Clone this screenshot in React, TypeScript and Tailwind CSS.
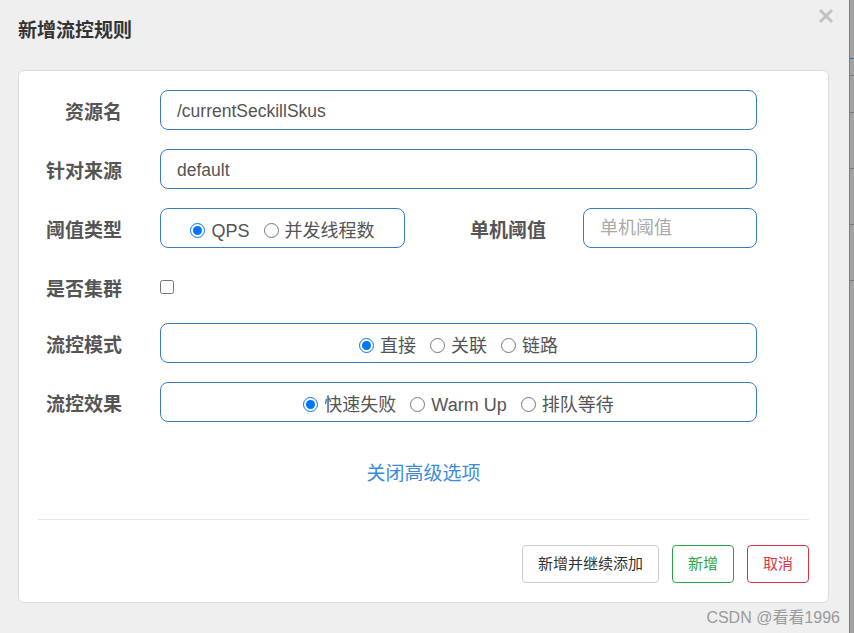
import { useState } from "react";

const font = "font-['Liberation_Sans','Noto_Sans_CJK_SC',sans-serif]";

function Radio({ name, label, checked, onChange }: { name: string; label: string; checked: boolean; onChange: () => void }) {
  return (
    <label className="flex items-center gap-[6px] text-[18px] text-[#555] translate-y-[2px]">
      <input type="radio" name={name} checked={checked} onChange={onChange} className="m-0 w-[15px] h-[15px] accent-[#0075ff]" />
      <span className="translate-y-[1px]">{label}</span>
    </label>
  );
}

function Row({ label, children }: { label: string; children: React.ReactNode }) {
  return (
    <div className="flex items-center gap-[38px]">
      <div className="w-[84px] pt-[7px] text-right text-[19px] font-bold text-[#555] whitespace-nowrap">{label}</div>
      {children}
    </div>
  );
}

export default function App() {
  const [grade, setGrade] = useState("QPS");
  const [strategy, setStrategy] = useState("直接");
  const [behavior, setBehavior] = useState("快速失败");

  return (
    <div className={`flex w-[854px] h-[633px] overflow-hidden ${font}`}>
      <div className="relative flex-1 bg-[#efefef] flex flex-col">
        <button className="absolute right-[15px] top-[8px] text-[#c2c2c2]">
          <svg width="16" height="16" viewBox="0 0 16 16">
            <path d="M2 2L14 14M14 2L2 14" stroke="currentColor" strokeWidth="3" />
          </svg>
        </button>
        <h3 className="pl-[18px] pt-[18px] text-[19px] leading-[26px] font-bold text-[#333]">新增流控规则</h3>

        <div className="ml-[18px] mt-[26px] w-[811px] bg-white border border-[#dcdcdc] rounded-[6px] px-[19px] pt-[19px] pb-[19px]">
          <div className="flex flex-col gap-[19px]">
            <Row label="资源名">
              <input
                defaultValue="/currentSeckillSkus"
                className="w-[597px] h-[40px] border border-[#3a7cc1] rounded-[8px] px-[16px] pt-[2px] text-[17.5px] text-[#555] outline-none"
              />
            </Row>
            <Row label="针对来源">
              <input
                defaultValue="default"
                className="w-[597px] h-[40px] border border-[#3a7cc1] rounded-[8px] px-[16px] pt-[2px] text-[17.5px] text-[#555] outline-none"
              />
            </Row>
            <Row label="阈值类型">
              <div className="flex items-center">
                <div className="w-[245px] h-[40px] border border-[#3a7cc1] rounded-[8px] flex items-center justify-center gap-[14px]">
                  <Radio name="grade" label="QPS" checked={grade === "QPS"} onChange={() => setGrade("QPS")} />
                  <Radio name="grade" label="并发线程数" checked={grade === "线程"} onChange={() => setGrade("线程")} />
                </div>
                <div className="w-[141px] pt-[7px] text-right text-[19px] font-bold text-[#555]">单机阈值</div>
                <input
                  placeholder="单机阈值"
                  className="ml-[37px] w-[174px] h-[40px] border border-[#3a7cc1] rounded-[8px] px-[16px] text-[18px] text-[#555] placeholder:text-[#aaa] outline-none"
                />
              </div>
            </Row>
            <div className="flex items-center gap-[38px] h-[37px]">
              <div className="w-[84px] pt-[9px] text-right text-[19px] font-bold text-[#555]">是否集群</div>
              <input type="checkbox" className="m-0 mt-[3px] w-[14px] h-[14px]" />
            </div>
            <Row label="流控模式">
              <div className="w-[597px] h-[40px] border border-[#3a7cc1] rounded-[8px] flex items-center justify-center gap-[14px]">
                {["直接", "关联", "链路"].map((s) => (
                  <Radio key={s} name="strategy" label={s} checked={strategy === s} onChange={() => setStrategy(s)} />
                ))}
              </div>
            </Row>
            <Row label="流控效果">
              <div className="w-[597px] h-[40px] border border-[#3a7cc1] rounded-[8px] flex items-center justify-center gap-[14px]">
                {["快速失败", "Warm Up", "排队等待"].map((s) => (
                  <Radio key={s} name="behavior" label={s} checked={behavior === s} onChange={() => setBehavior(s)} />
                ))}
              </div>
            </Row>
          </div>

          <div className="mt-[38px] text-center">
            <a className="text-[19px] leading-[28px] text-[#3d8bd8] cursor-pointer">关闭高级选项</a>
          </div>

          <div className="mt-[31px] h-px bg-[#e5e5e5]" />

          <div className="mt-[25px] flex justify-end gap-[13px]">
            <button className="h-[38px] px-[15px] border border-[#ccc] rounded-[4px] text-[15px] text-[#333] bg-white">新增并继续添加</button>
            <button className="h-[38px] px-[15px] border border-[#28a745] rounded-[4px] text-[15px] text-[#28a745] bg-white">新增</button>
            <button className="h-[38px] px-[15px] border border-[#dc3545] rounded-[4px] text-[15px] text-[#dc3545] bg-white">取消</button>
          </div>
        </div>

        <div className="flex justify-end pr-[9px] mt-[5px] text-[16px] leading-[20px] text-[#9a9a9a]">CSDN @看看1996</div>
      </div>
      <div className="w-[5px] bg-[#a3a3a3] border-l border-[#7a7a7a] flex flex-col">
        <div className="mt-[58px] h-px bg-[#3a6ea8]" />
        <div className="mt-[16px] h-px bg-[#777]" />
        <div className="mt-[36px] h-px bg-[#777]" />
        <div className="mt-[55px] h-px bg-[#777]" />
        <div className="mt-[55px] h-px bg-[#777]" />
        <div className="mt-[55px] h-px bg-[#777]" />
      </div>
    </div>
  );
}
